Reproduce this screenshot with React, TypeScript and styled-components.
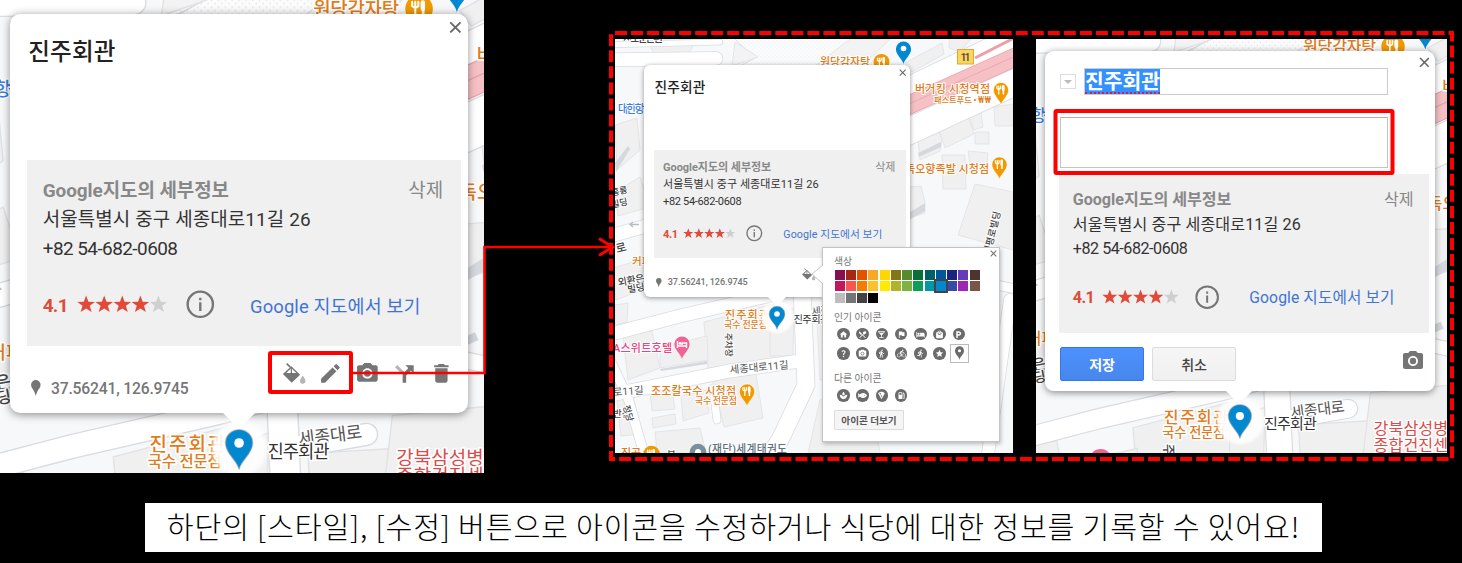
import React from 'react';
import styled, { createGlobalStyle, css } from 'styled-components';
import {
  MdHome, MdRestaurantMenu, MdLocalBar, MdFlag, MdHotel, MdLocalMall, MdLocalParking,
  MdQuestionMark, MdPhotoCamera, MdDirectionsWalk, MdDirectionsBike, MdDirectionsRun, MdStar,
  MdLocalPizza, MdEdit, MdDelete, MdSpa, MdLocalGasStation,
} from 'react-icons/md';
import { FaFish } from 'react-icons/fa';

const FONT = `Roboto, 'Noto Sans CJK KR', sans-serif`;

const GlobalStyle = createGlobalStyle`
  * { box-sizing: border-box; }
  body { margin: 0; background: #000; font-family: ${FONT}; }
`;

/* Lengths inside a popup are expressed in its own unit so that it scales with its map. */
const u = (n: number) => `calc(var(--u) * ${n})`;

const Stage = styled.main`
  position: relative;
  width: 1462px;
  height: 563px;
  overflow: hidden;
  background: #000;
`;

const Panels = styled.div`
  display: flex;
  align-items: flex-start;
  height: 503px;
`;

const MapPane = styled.section<{ $w: number; $h: number }>`
  position: relative;
  flex: none;
  width: ${(p) => p.$w}px;
  height: ${(p) => p.$h}px;
  overflow: hidden;
  background: #f6f7f9;
`;

const Frame = styled.div`
  display: flex;
  gap: 23px;
  margin-left: 131px;
  padding-top: 39px;
`;

const MapSvg = styled.svg`
  display: block;
  width: 100%;
  height: 100%;
`;

const Overlay = styled.svg`
  position: absolute;
  inset: 0;
  pointer-events: none;
`;

const Popup = styled.article<{ $unit: number; $x: number; $y: number }>`
  --u: ${(p) => p.$unit}px;
  position: absolute;
  left: ${(p) => p.$x}px;
  top: ${(p) => p.$y}px;
  width: ${u(266)};
  height: ${u(231.6)};
  padding: 0 ${u(4.2)} 0 ${u(9.6)};
  background: #fff;
  border-radius: ${u(6)};
  box-shadow: 0 ${u(1)} ${u(5)} rgba(0, 0, 0, 0.42);
  display: flex;
  flex-direction: column;
`;

const Tail = styled.i`
  position: absolute;
  left: ${u(123.5)};
  top: 100%;
  border: ${u(9.5)} solid transparent;
  border-top-color: #fff;
  border-bottom-width: 0;
`;

const PopupHead = styled.header`
  flex: none;
  display: flex;
  justify-content: space-between;
  align-items: flex-start;
  height: ${u(84.5)};
`;

const Title = styled.h1`
  margin: ${u(12.2)} 0 0 ${u(1)};
  font-size: ${u(13.7)};
  line-height: ${u(20)};
  font-weight: 500;
  letter-spacing: ${u(0.1)};
  color: #222;
`;

const CloseIcon = styled.svg`
  flex: none;
  width: ${u(7.4)};
  height: ${u(7.4)};
  margin: ${u(3.8)} ${u(-0.6)} 0 0;
`;

const Details = styled.div`
  flex: none;
  width: ${u(252.3)};
  height: ${u(108.4)};
  padding: ${u(9.4)} ${u(10.4)} 0 ${u(9.4)};
  background: #f0f0f0;
  font-size: ${u(11)};
  line-height: ${u(17)};
  color: #333;
`;

const DetailsHead = styled.div`
  display: flex;
  justify-content: space-between;
  color: #888;
`;

const Strong = styled.strong`
  font-weight: 700;
  letter-spacing: ${u(-0.03)};
`;

const Address = styled.div`
  letter-spacing: ${u(0.07)};
`;

const Phone = styled.div`
  letter-spacing: ${u(-0.32)};
`;

const RatingRow = styled.div`
  display: flex;
  align-items: center;
  height: ${u(20)};
  margin-top: ${u(13.8)};
`;

const Score = styled.b`
  width: ${u(20)};
  color: #dd4b39;
  padding-top: ${u(1.5)};
  letter-spacing: ${u(-0.4)};
`;

const Stars = styled.svg`
  width: ${u(53)};
  height: ${u(11)};
  margin-right: ${u(10.4)};
`;

const InfoIcon = styled.svg`
  width: ${u(16.6)};
  height: ${u(16.6)};
  margin-right: ${u(20.4)};
`;

const MapLink = styled.a`
  color: #3f74d6;
  padding-top: ${u(2)};
  font-size: ${u(10.7)};
  letter-spacing: ${u(0.07)};
  white-space: nowrap;
`;

const Foot = styled.footer`
  display: flex;
  flex: 1;
  justify-content: space-between;
  padding: ${u(8.5)} ${u(4)} 0 ${u(2.6)};
  color: #757575;
`;

const Coordinates = styled.div`
  display: flex;
  align-items: center;
  gap: ${u(6)};
  height: ${u(14)};
  margin-top: ${u(9)};
  font-size: ${u(9.1)};
  font-weight: 500;
  letter-spacing: ${u(-0.1)};

  svg { width: ${u(5.6)}; height: ${u(9.4)}; }
`;

const Tools = styled.div`
  display: flex;
  align-items: center;
  height: ${u(15)};
  gap: ${u(7.1)};

  svg { display: block; width: ${u(14.4)}; height: ${u(14.4)}; }
`;

const EditHead = styled(PopupHead)`
  display: block;
  height: ${u(83.8)};
  padding-left: 1px;
`;

const NameRow = styled.div`
  display: flex;
  align-items: center;
  height: 27px;
  margin-top: 17px;
`;

const DropButton = styled.span`
  display: flex;
  align-items: center;
  justify-content: center;
  width: 16px;
  height: 15px;
  margin-right: 8px;
  border: 1px solid #ddd;

  &::after {
    content: '';
    border: 4px solid transparent;
    border-top-color: #bbb;
    border-bottom-width: 0;
  }
`;

const NameField = styled.div`
  width: 304px;
  height: 27px;
  border: 1px solid #ccc;
  display: flex;
  align-items: center;
`;

const Selected = styled.span`
  height: 25px;
  line-height: 26px;
  font-size: 20.4px;
  font-weight: 700;
  color: #fff;
  background: #3390ff;
  border-bottom: 2px dotted #d0204a;
`;

const Note = styled.div`
  width: 328px;
  height: 51px;
  margin-top: 22px;
  border: 1px solid #c4c4c4;
  border-top-color: #d9a0a0;
`;

const EditClose = styled(CloseIcon)`
  position: absolute;
  right: ${u(4.4)};
  top: 0;
`;

const EditFoot = styled.footer`
  display: flex;
  align-items: center;
  gap: 8px;
  height: 34px;
  margin-top: 14px;
  padding: 0 4px 0 1px;
  color: #757575;

  svg { width: 24px; height: 24px; margin: -5px 0 0 auto; }
`;

const Button = styled.button<{ $primary?: boolean }>`
  width: 84px;
  height: 34px;
  padding: 0;
  border: 1px solid #dcdcdc;
  border-radius: 2px;
  font: 500 14px ${FONT};
  color: #444;
  background: linear-gradient(#f6f6f6, #f0f0f0);
  ${(p) => p.$primary && css`
    font-weight: 700;
    color: #fff;
    border-color: #3079ed;
    background: linear-gradient(#4d90fe, #4787ed);
  `}
`;

const StylePanel = styled.aside`
  position: absolute;
  left: 207px;
  top: 208px;
  width: 178px;
  height: 195px;
  padding: 7px 0 0 11px;
  background: #fff;
  border: 1px solid #c4c4c4;
  box-shadow: 1px 2px 4px rgba(0, 0, 0, 0.25);
  font-size: 10px;
  color: #777;
`;

const PanelTail = styled.svg`
  position: absolute;
  left: -12px;
  top: 17px;
`;

const PanelClose = styled.svg`
  position: absolute;
  right: 2px;
  top: 2px;
`;

const PanelLabel = styled.div<{ $top?: number }>`
  height: 14px;
  line-height: 14px;
  margin-top: ${(p) => p.$top ?? 0}px;
  font-size: 9.8px;
`;

const Swatches = styled.div`
  display: grid;
  grid-template-columns: repeat(13, 10px);
  grid-auto-rows: 10px;
  gap: 1.25px;
  padding: 1px 0 0 0.5px;
`;

const Swatch = styled.i<{ $color: string; $on?: boolean }>`
  background: ${(p) => p.$color};
  ${(p) => p.$on && css`box-shadow: 0 0 0 2px #444; z-index: 1;`}
`;

const IconGrid = styled.div`
  display: grid;
  grid-template-columns: repeat(7, 19.25px);
  grid-auto-rows: 19.3px;
  align-items: center;
`;

const RoundIcon = styled.span`
  display: flex;
  align-items: center;
  justify-content: center;
  width: 12.5px;
  height: 12.5px;
  margin-left: 3px;
  border-radius: 50%;
  background: #6b6b6b;
  color: #fff;
  font-size: 9px;
`;

const PinChoice = styled.span`
  display: flex;
  align-items: center;
  justify-content: center;
  width: 19px;
  height: 19px;
  border: 1px solid #bbb;
  color: #6b6b6b;
`;

const MoreButton = styled.button`
  width: 70px;
  height: 20px;
  margin-top: 5px;
  padding: 0;
  border: 1px solid #dcdcdc;
  border-radius: 1px;
  background: #f5f5f5;
  font: 700 9.6px ${FONT};
  color: #555;
`;

const Caption = styled.p`
  display: flex;
  align-items: center;
  justify-content: center;
  width: 1177px;
  height: 49px;
  margin: 0 0 0 145px;
  padding-bottom: 4px;
  background: #fff;
  color: #000;
  font: 300 29.2px 'Noto Sans CJK KR', sans-serif;
  line-height: 45px;
  letter-spacing: 0.81px;
  white-space: nowrap;
`;

const PIN = 'M0 15 C-1 10 -7.6 6 -7.6 0 A7.6 7.6 0 1 1 7.6 0 C7.6 6 1 10 0 15 Z';

type LabelProps = {
  x: number; y: number; w?: number; size?: number; fill?: string; rotate?: number; weight?: number; children: string;
};

const Label = ({ x, y, w, size = 11, fill = '#444', rotate = 0, weight = 500, children }: LabelProps) => (
  <text
    x={x} y={y} fontSize={size} fill={fill} fontWeight={weight} textLength={w}
    transform={rotate ? `rotate(${rotate} ${x} ${y})` : undefined}
    stroke="#fff" strokeWidth="2" strokeLinejoin="round" paintOrder="stroke"
    fontFamily={FONT}
  >
    {children}
  </text>
);

const Fork = () => (
  <g stroke="#fff" fill="none" strokeLinecap="round">
    <path d="M-2.2 4 V-4 M-4 -4 V-1.6 Q-2.2 0.4 -0.4 -1.6 V-4" strokeWidth="1.2" />
    <path d="M2.4 4 V-3.6" strokeWidth="1.6" />
    <path d="M2.2 -3.6 V0" strokeWidth="2.6" />
  </g>
);

const FoodPin = ({ x, y }: { x: number; y: number }) => (
  <g transform={`translate(${x} ${y})`}>
    <path d={PIN} fill="#f29900" stroke="#fff" strokeWidth="0.6" />
    <Fork />
  </g>
);

const roads: [string, number][] = [
  ['M600 90 L600 40 M600 60 L716 58.5', 13],
  ['M600 45 L720 42', 5],
  ['M600 239 L660 222', 13],
  ['M600 337 L680 316 L767 296 L860 270', 13],
  ['M600 397 L730 371 L800 361', 13],
  ['M802 290 L806 385 L780 440 L755 475', 17],
  ['M713 388 L717 420', 7],
  ['M610 360 L628 398 L650 475', 9],
  ['M800 318 L851 309', 12],
  ['M1020 36 L890 98', 24],
  ['M1020 80 L890 140', 26],
  ['M890 262 L1020 290', 9],
  ['M1010 300 L985 475', 12],
];

const buildings = [
  '648,39 692,39 692,48 688,54 654,55 651,47',
  '740,39 830,39 800,70 770,66',
  '905,63 942,43 944,54 912,72',
  '950,28 975,34 960,52 949,48',
  '918,140 938,127 942,140 940,151 920,160',
  '938,126 966,108 974,134 945,148',
  '967,112 980,106 983,127 974,130',
  '994,107 1013,104 1013,126 995,126',
  '975,132 989,132 989,144 975,144',
  '942,155 965,155 966,189 943,189',
  '968,151 988,153 987,166 970,165',
  '907,187 921,186 925,202 925,213 907,219',
  '975,184 1013,192 1013,250 958,235',
  '615,125 637,118 640,150 617,170',
  '615,192 640,177 650,207 618,216',
  '613,268 650,257 655,285 616,300',
  '615,305 628,303 627,322 615,325',
  '704,322 780,302 794,342 780,358 708,368',
  '770,318 794,308 793,356 770,356',
  '623,336 652,331 660,368 628,380',
  '660,347 707,336 708,360 660,368',
  '650,391 671,384 675,409 652,411',
  '681,396 706,390 709,413 683,421',
  '712,378 755,368 763,418 724,427',
  '652,418 675,414 676,424 653,428',
  '615,384 632,392 642,434 621,436',
  '655,432 700,428 706,453 657,453',
  '817,320 870,317 880,360 820,380',
  '820,400 870,392 880,453 808,453',
  '866,298 950,290 950,360 860,350',
];

const CityMap = ({ viewBox }: { viewBox: string }) => (
  <MapSvg viewBox={viewBox} preserveAspectRatio="none">
    <defs>
      <pattern id="dots" width="4" height="4" patternUnits="userSpaceOnUse">
        <circle cx="1" cy="1" r="0.5" fill="#dfe1e5" />
        <circle cx="3" cy="3" r="0.5" fill="#dfe1e5" />
      </pattern>
      <filter id="soft"><feGaussianBlur stdDeviation="1.2" /></filter>
    </defs>
    <rect x="590" y="20" width="450" height="460" fill="#f7f8fa" />
    {buildings.map((points) => (
      <polygon key={points} points={points} fill="#f0f0f0" stroke="#e0e1e4" strokeWidth="0.8" />
    ))}
    <path d="M725 39 H850 L820 70 H735 Z" fill="#fcfcfd" />
    <path d="M725 39 H850 L820 70 H735 Z" fill="url(#dots)" />
    <path d="M735 39 L755 58 L740 66" fill="none" stroke="#dcdfe3" />
    <path d="M735 42 L758 57 L732 66 Z M815 66 L850 39 H890 L860 68 Z" fill="#f3f3f4" stroke="#e0e1e4" strokeWidth="0.8" />
    <path d="M918 153 L941 142 L941 147 L919 157 Z M907 214 L925 203 V211 L907 221 Z M615 163 L628 146 L630 149 L616 172 Z M660 369 L707 361 V364 L661 371 Z" fill="#d5d8dc" />
    {roads.map(([d, w]) => <path key={d} d={d} fill="none" stroke="#d9dce1" strokeWidth={w + 1.6} strokeLinecap="round" />)}
    {roads.map(([d, w]) => <path key={d} d={d} fill="none" stroke="#fff" strokeWidth={w} strokeLinecap="round" />)}
    <path d="M1020 55 L900 109" stroke="#e6a3aa" strokeWidth="19" />
    <path d="M1020 55 L900 109" stroke="#f6c1c5" strokeWidth="17.6" />
    <path d="M1020 54 L900 108" stroke="#e6a3aa" strokeWidth="0.8" />
    <path d="M975 58 L1020 35" stroke="#ee9ea6" strokeWidth="3" />
    <path d="M880 268 L915 252" stroke="#d2d6da" strokeWidth="5" />
    <path d="M639 224.5 H630 M633 222 L630 224.5 L633 227" stroke="#b8bcc4" fill="none" strokeWidth="1.3" />

    <Label x={623} y={42} w={40} size={10.5}>서소문은편</Label>
    <Label x={618} y={112.5} w={35} fill="#3b7de0">대한항공</Label>
    <Label x={612} y={196} size={9} rotate={-12}>흥륭</Label>
    <Label x={612} y={208} size={9} rotate={-12}>빌딩</Label>
    <Label x={617} y={253} size={11.5} rotate={-15}>로</Label>
    <Label x={632} y={265} size={10.5} fill="#e07c1a">커피</Label>
    <Label x={618.5} y={286} size={10} w={36} rotate={-10}>외환은행</Label>
    <Label x={628} y={293} size={9.5} rotate={-10}>빌딩</Label>
    <Label x={820} y={66} w={50} size={11} fill="#e07c1a">원당감자탕</Label>
    <g transform="translate(881.5 62)"><circle r="8" fill="#f29900" /><Fork /></g>
    <path d={PIN} transform="translate(903.5 49)" fill="#0288d1" />
    <circle cx="903.5" cy="48.5" r="2.8" fill="#fff" />
    <rect x="957.5" y="49.5" width="16" height="14.5" fill="#fdd55c" stroke="#d9a93a" />
    <text x="960.5" y="61" fontSize="10.5" fontWeight="500" fill="#444" textLength="10" fontFamily={FONT}>11</text>
    <Label x={915} y={93} w={75} size={11} fill="#e07c1a">버거킹 시청역점</Label>
    <Label x={934} y={102.5} w={57} size={8.5} fill="#e07c1a">패스트푸드 • ₩₩</Label>
    <FoodPin x={1001} y={90} />
    <Label x={905} y={172.5} w={84} size={11} fill="#e07c1a">독오향족발 시청점</Label>
    <FoodPin x={999.5} y={164.5} />
    <Label x={990} y={255} w={44} size={9.5} rotate={-76}>태평로빌딩</Label>
    <Label x={613} y={352} w={59} size={11} fill="#e8457f">A스위트호텔</Label>
    <g transform="translate(682 344)">
      <path d={PIN} fill="#f06292" />
      <path d="M-4.5 -3 V4 M-4.5 2 H4.5 M4.5 4 V-1 H0 V1" stroke="#fff" strokeWidth="1.4" fill="none" />
      <circle cx="-2" cy="-0.6" r="1.3" fill="#fff" />
    </g>
    <Label x={725} y={333} size={9} rotate={88} w={24}>주차장</Label>
    <Label x={730} y={373.5} w={59} size={10.5} fill="#555" weight={400} rotate={-5}>세종대로11길</Label>
    <Label x={613} y={396} w={31} size={10.5} fill="#555" weight={400} rotate={-4}>로11길</Label>
    <Label x={651} y={394.5} w={85} size={11} fill="#e07c1a">조조칼국수 시청점</Label>
    <Label x={695} y={404} w={42} size={9} fill="#e07c1a">국수 전문점</Label>
    <FoodPin x={747} y={391.5} />
    <Label x={613} y={417} size={9.5}>반점</Label>
    <Label x={623} y={406} size={9} rotate={75}>정당</Label>
    <Label x={621} y={457} size={11} fill="#e07c1a">진공</Label>
    <g transform="translate(651.5 454)"><circle r="8.3" fill="#f29900" /><Fork /></g>
    <Label x={667} y={458} size={9.5}>부</Label>
    <circle cx="698" cy="452" r="8.3" fill="#78909c" />
    <circle cx="698" cy="452" r="3" fill="#fff" />
    <Label x={708} y={453} w={79} size={10.8} fill="#607080">(재단)세계태권도</Label>
    <Label x={812} y={315.5} w={37} size={10.3} fill="#555" weight={400} rotate={-7}>세종대로</Label>
    <Label x={793.5} y={322.5} w={36} size={10.3} fill="#333" weight={400}>진주회관</Label>
    <Label x={868.2} y={326.5} w={61} size={11} fill="#dc4a4a" weight={400}>강북삼성병원</Label>
    <Label x={868.2} y={337.5} w={61} size={11} fill="#dc4a4a" weight={400}>종합건진센터</Label>
    <Label x={725} y={318.8} w={44} size={11} fill="#e07c1a">진주회관</Label>
    <Label x={724} y={328} w={43} size={9} fill="#e07c1a">국수 전문점</Label>
    <circle cx="777.3" cy="317" r="16" fill="#fff" opacity="0.9" filter="url(#soft)" />
    <path d={PIN} transform="translate(777 314) scale(1.04 1.02)" fill="#0288d1" stroke="#999" strokeOpacity="0.5" strokeWidth="0.8" />
    <circle cx="777" cy="314" r="2.8" fill="#fff" />
  </MapSvg>
);

const Cross = ({ as: Tag }: { as: React.ElementType }) => (
  <Tag viewBox="0 0 10 10"><path d="M1 1 L9 9 M9 1 L1 9" stroke="#666" strokeWidth="1.4" /></Tag>
);

const STAR = 'M0 -5.3 L1.35 -1.7 L5.1 -1.6 L2.1 0.7 L3.2 4.3 L0 2.2 L-3.2 4.3 L-2.1 0.7 L-5.1 -1.6 L-1.35 -1.7 Z';

const PlaceDetails = () => (
  <Details>
    <DetailsHead><Strong>Google지도의 세부정보</Strong><span>삭제</span></DetailsHead>
    <Address>서울특별시 중구 세종대로11길 26</Address>
    <Phone>+82 54-682-0608</Phone>
    <RatingRow>
      <Score>4.1</Score>
      <Stars viewBox="0 0 53 11">
        {[0, 1, 2, 3, 4].map((i) => (
          <path key={i} d={STAR} transform={`translate(${5.3 + i * 10.5} 5.6)`} fill={i < 4 ? '#e04a3a' : '#cfcfcf'} />
        ))}
      </Stars>
      <InfoIcon viewBox="0 0 28 28">
        <circle cx="14" cy="14" r="12.4" fill="none" stroke="#757575" strokeWidth="2.3" />
        <path d="M14 12 V20.5 M14 7.5 V10" stroke="#757575" strokeWidth="2.3" />
      </InfoIcon>
      <MapLink>Google 지도에서 보기</MapLink>
    </RatingRow>
  </Details>
);

const SmallPin = ({ width = 10, height = 17 }: { width?: number; height?: number }) => (
  <svg viewBox="0 0 10 17" width={width} height={height}>
    <path fill="currentColor" d="M5 0 A5 5 0 0 1 10 5 C10 9 6.4 10 5 17 C3.6 10 0 9 0 5 A5 5 0 0 1 5 0 Z" />
  </svg>
);

const PaintIcon = () => (
  <svg viewBox="0 0 24 24" fill="none">
    <path d="M5.5 2.5 L9 6" stroke="#757575" strokeWidth="1.6" />
    <path d="M10 5 L18.5 13.2 L10.4 21 L1.8 12.6 Z" fill="#757575" />
    <path d="M10 6.8 L14.8 11.6 H5.2 Z" fill="#fff" />
    <path d="M10 6 V12" stroke="#757575" strokeWidth="1.2" />
    <path d="M21 14 Q24 18 23.6 19.4 A2.6 2.6 0 0 1 18.4 19.4 Q18.4 17.5 21 14 Z" fill="#b5b5b5" />
  </svg>
);

const RouteIcon = () => (
  <svg viewBox="0 0 24 24" fill="none">
    <path d="M4 5 L11 12" stroke="#b5b5b5" strokeWidth="3" />
    <path d="M12 21 V13.5 L18 7" stroke="#757575" strokeWidth="3.4" />
    <path d="M13 4 H21 V12 Z" fill="#757575" />
  </svg>
);

const InfoPopup = ({ unit, x, y }: { unit: number; x: number; y: number }) => (
  <Popup $unit={unit} $x={x} $y={y}>
    <PopupHead>
      <Title>진주회관</Title>
      <Cross as={CloseIcon} />
    </PopupHead>
    <PlaceDetails />
    <Foot>
      <Coordinates><SmallPin />37.56241, 126.9745</Coordinates>
      <Tools>
        <PaintIcon />
        <MdEdit />
        <MdPhotoCamera />
        <RouteIcon />
        <MdDelete />
      </Tools>
    </Foot>
    <Tail />
  </Popup>
);

const EditPopup = () => (
  <Popup $unit={1.466} $x={9} $y={12}>
    <EditHead>
      <NameRow>
        <DropButton />
        <NameField><Selected>진주회관</Selected></NameField>
      </NameRow>
      <Note />
      <Cross as={EditClose} />
    </EditHead>
    <PlaceDetails />
    <EditFoot>
      <Button $primary>저장</Button>
      <Button>취소</Button>
      <MdPhotoCamera />
    </EditFoot>
    <Tail />
  </Popup>
);

const colors = [
  '#880e4f', '#a52714', '#e65100', '#f9a825', '#ffd600', '#817717', '#558b2f', '#097138', '#006064', '#01579b', '#1a237e', '#673ab7', '#4e342e',
  '#c2185b', '#ff5252', '#f57c00', '#fbc02d', '#ffea00', '#afb42b', '#7cb342', '#0f9d58', '#0097a7', '#0288d1', '#3949ab', '#9c27b0', '#795548',
  '#bdbdbd', '#757575', '#424242', '#000000',
];

const popularIcons = [
  MdHome, MdRestaurantMenu, MdLocalBar, MdFlag, MdHotel, MdLocalMall, MdLocalParking,
  MdQuestionMark, MdPhotoCamera, MdDirectionsWalk, MdDirectionsBike, MdDirectionsRun, MdStar,
];
const otherIcons = [MdSpa, FaFish, MdLocalPizza, MdLocalGasStation];

const StyleChooser = () => (
  <StylePanel>
    <PanelTail width="12" height="20" viewBox="0 0 12 20">
      <path d="M12 0 L1 9 L12 19" fill="#fff" stroke="#c4c4c4" />
      <path d="M12 1 V18" stroke="#fff" strokeWidth="2" />
    </PanelTail>
    <PanelClose width="7" height="7" viewBox="0 0 10 10"><path d="M1 1 L9 9 M9 1 L1 9" stroke="#777" strokeWidth="1.7" /></PanelClose>
    <PanelLabel>색상</PanelLabel>
    <Swatches>{colors.map((c) => <Swatch key={c} $color={c} $on={c === '#0288d1'} />)}</Swatches>
    <PanelLabel $top={8}>인기 아이콘</PanelLabel>
    <IconGrid>
      {popularIcons.map((Icon, i) => <RoundIcon key={i}><Icon /></RoundIcon>)}
      <PinChoice>
        <svg viewBox="0 0 10 15" width="9" height="14">
          <path fill="currentColor" fillRule="evenodd" d="M5 0 A5 5 0 0 1 10 5 C10 9 6 11 5 15 C4 11 0 9 0 5 A5 5 0 0 1 5 0 Z M5 3.2 A1.7 1.7 0 1 0 5 6.6 A1.7 1.7 0 1 0 5 3.2 Z" />
        </svg>
      </PinChoice>
    </IconGrid>
    <PanelLabel $top={9}>다른 아이콘</PanelLabel>
    <IconGrid>{otherIcons.map((Icon, i) => <RoundIcon key={i}><Icon /></RoundIcon>)}</IconGrid>
    <MoreButton>아이콘 더보기</MoreButton>
  </StylePanel>
);

export default function App() {
  return (
    <Stage>
      <GlobalStyle />
      <Panels>
        <MapPane $w={484} $h={473}>
          <CityMap viewBox="638.2 56.9 281 274.5" />
          <InfoPopup unit={1.722} x={10} y={14} />
        </MapPane>
        <Frame>
          <MapPane $w={398} $h={414}>
            <CityMap viewBox="615 39 398 414" />
            <InfoPopup unit={1} x={29} y={26} />
            <StyleChooser />
          </MapPane>
          <MapPane $w={411} $h={414}>
            <CityMap viewBox="637.9 56.8 280.4 282.4" />
            <EditPopup />
          </MapPane>
        </Frame>
      </Panels>
      <Caption>하단의 [스타일], [수정] 버튼으로 아이콘을 수정하거나 식당에 대한 정보를 기록할 수 있어요!</Caption>
      <Overlay width="1462" height="563" fill="none" stroke="#f00">
        <rect x="611" y="33" width="841" height="426" strokeWidth="4" strokeDasharray="12 4.03" strokeDashoffset="-4" />
        <rect x="270" y="353" width="81" height="39" strokeWidth="4" rx="1" />
        <rect x="1055.5" y="111" width="337" height="62" strokeWidth="4" rx="1" />
        <path d="M353 373 H484.5 V247 H612" strokeWidth="2.6" />
        <path d="M599 238.5 L612.5 247 L599 255.5" strokeWidth="3" />
      </Overlay>
    </Stage>
  );
}
